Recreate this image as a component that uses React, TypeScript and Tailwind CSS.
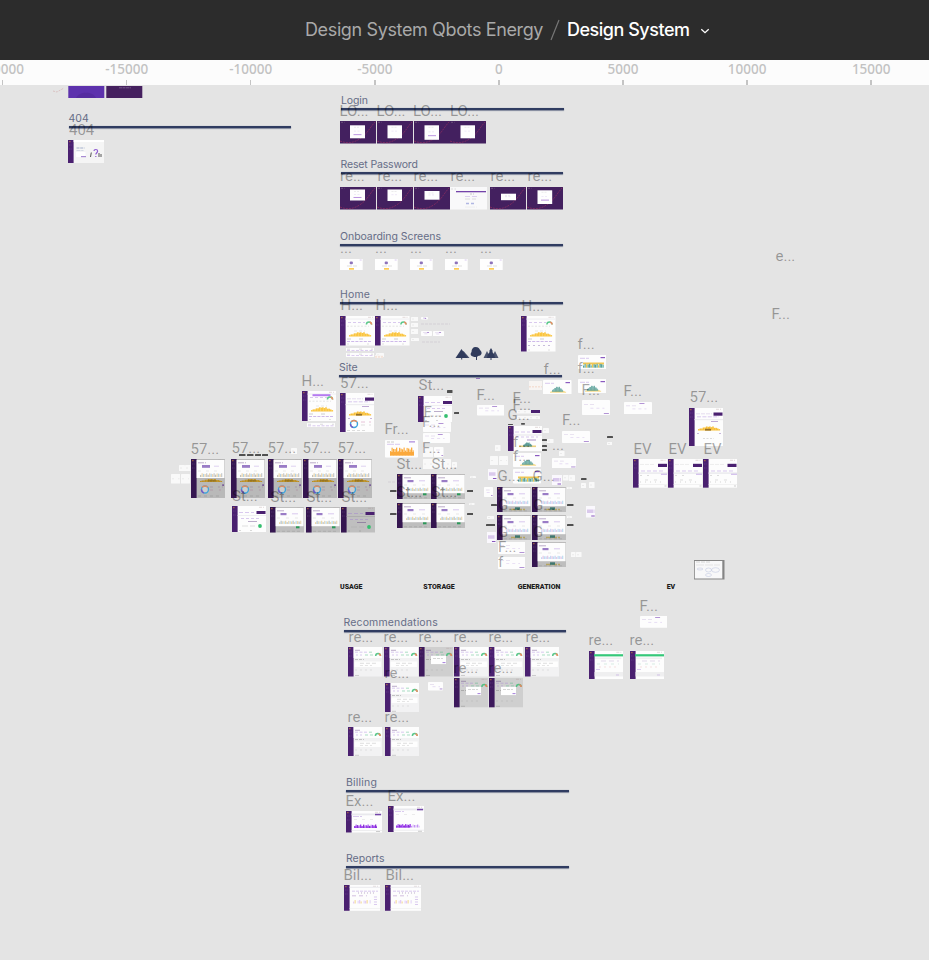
import React from "react";

type Kind =
  | "home" | "homePurple" | "site" | "siteYellow" | "siteModal" | "storage" | "storageModal" | "storageGray"
  | "gen" | "genModal" | "ev" | "rec" | "recGray" | "recGreen" | "billing" | "report" | "notFound"
  | "note" | "noteRight" | "plain" | "lilac" | "faint" | "teal" | "tealWide" | "orange" | "onboard" | "rule" | "peach";

type Item = [Kind, number, number, number, number];

const PURPLE = "#4a2070";
const VIOLET = "#9b6fd6";

function Dash({ x, y, w, c = VIOLET, d = "2 1.5", t = 0.8, o = 0.6 }: {
  x: number; y: number; w: number; c?: string; d?: string; t?: number; o?: number;
}) {
  return <line x1={x} x2={x + w} y1={y} y2={y} stroke={c} strokeWidth={t} strokeDasharray={d} opacity={o * 0.75} />;
}

const shape = [2, 3, 3, 4.5, 4.5, 6, 5.5, 6, 5, 6, 4, 4, 3, 2];

function Hill({ x, y, w, h, c }: { x: number; y: number; w: number; h: number; c: string }) {
  const s = w / shape.length;
  return (
    <g fill={c}>
      {shape.map((v, i) => (
        <rect key={i} x={x + i * s} y={y - (v * h) / 6} width={s + 0.1} height={(v * h) / 6} />
      ))}
    </g>
  );
}

function Bars({ x, y, w, h, cs }: { x: number; y: number; w: number; h: number; cs: string[] }) {
  const n = Math.floor(w / 1.5);
  return (
    <g>
      {Array.from({ length: n }, (_, i) => {
        const v = h * (0.55 + 0.45 * Math.abs(Math.sin(i * 1.9)));
        return <rect key={i} x={x + i * 1.5} y={y - v} width={1.3} height={v} fill={cs[i % cs.length]} />;
      })}
    </g>
  );
}

function Gauge({ x, y, r }: { x: number; y: number; r: number }) {
  const arc = `M${x - r} ${y}A${r} ${r} 0 0 1 ${x + r} ${y}`;
  return (
    <g fill="none" strokeWidth={1.5} opacity={0.85}>
      <path d={arc} stroke="#3fbf78" />
      <path d={arc} stroke="#f0784a" pathLength={10} strokeDasharray="0 6 4" />
    </g>
  );
}

function Donut({ x, y }: { x: number; y: number }) {
  return (
    <g fill="none" strokeWidth={1.4}>
      <circle cx={x} cy={y} r={3.5} fill="#ffffff" fillOpacity={0.3} stroke="#3da4dc" />
      <circle cx={x} cy={y} r={3.5} stroke="#e58a5a" pathLength={10} strokeDasharray="3 7" strokeDashoffset={4} />
      <circle cx={x} cy={y} r={3.5} stroke="#7659c4" pathLength={10} strokeDasharray="2 8" strokeDashoffset={7} />
    </g>
  );
}

function Shell({ w, h, bg = "#fdfdfd", side = PURPLE }: { w: number; h: number; bg?: string; side?: string }) {
  return (
    <g>
      <rect width={w} height={h} fill={bg} />
      <rect width={5.6} height={h} fill={side} />
      <rect x={1} y={1.2} width={1.6} height={1} fill="#c9803c" opacity={0.8} />
      <Dash x={1} y={5} w={3} c="#a883c9" d="1 0.6" o={0.4} />
      <Dash x={1} y={9} w={3} c="#a883c9" d="1 0.6" o={0.4} />
      <Dash x={w - 7} y={1.3} w={5} c="#a88a8a" d="3 1" o={0.5} />
    </g>
  );
}

function Art({ kind, w, h }: { kind: Kind; w: number; h: number }) {
  switch (kind) {
    case "home":
    case "homePurple":
      return (
        <g>
          <Shell w={w} h={h} />
          <rect x={5.6} y={2.5} width={w} height={1.2} fill="#efeff2" />
          {kind === "homePurple" && <rect x={10.5} y={3.2} width={18} height={2} fill="#b57bf0" />}
          <Dash x={8} y={6.5} w={17} d="3 2" />
          <Gauge x={w - 6} y={8.5} r={2.6} />
          <Dash x={7} y={10.2} w={22} c="#888" o={0.35} />
          <Dash x={14} y={15} w={11} c="#aaa" d="3 2" o={0.4} />
          <Hill x={9} y={20.5} w={22} h={4.2} c="#fac53f" />
          <Dash x={7} y={23} w={24} c="#666" d="4 8" o={0.5} />
          <Dash x={7} y={25.5} w={24} d="3 1.2" o={0.8} />
          {h > 32 && <Dash x={7} y={29.5} w={24} c="#6c4aa2" d="2 3" />}
          <Dash x={7} y={h - 1.5} w={24} c="#888" d="2 18" o={0.4} />
        </g>
      );
    case "site":
    case "siteYellow":
      return (
        <g>
          <Shell w={w} h={h} />
          <Dash x={7} y={5.8} w={16} c="#b094d0" d="4 1" o={0.5} />
          <rect x={w - 9.5} y={4.5} width={9} height={3.2} fill={PURPLE} />
          <Dash x={8} y={8.8} w={22} d="4 1.4" />
          <rect x={5.6} y={11} width={w} height={1.2} fill="#ededf0" />
          <Dash x={22} y={13.5} w={7} c="#6c3aa0" d="8 1" o={0.7} />
          <Hill x={9} y={22.5} w={22} h={4} c="#f8bf36" />
          <rect x={16} y={20.8} width={6} height={1.8} fill="#94702a" />
          <Dash x={8} y={25.5} w={24} c="#6c3aa0" d="2 20" />
          {kind === "site" ? (
            <g>
              <Donut x={14} y={31} />
              <Dash x={21} y={29} w={10} c="#c25c9a" d="4 4 2 4" />
              <Dash x={21} y={32} w={10} c="#aaa" d="4 4 2 4" />
              <Dash x={7} y={37.5} w={20} c="#777" d="3 2" o={0.4} />
            </g>
          ) : (
            <Dash x={14} y={30.5} w={11} c="#777" o={0.4} />
          )}
        </g>
      );
    case "siteModal":
      return (
        <g>
          <Shell w={w} h={h} bg="#b9b9b9" side="#351650" />
          <rect x={5.6} y={1} width={w - 6.4} height={18} fill="#fdfdfd" />
          <Dash x={7} y={3.8} w={8} c={PURPLE} d="6 1" />
          <rect x={11} y={6} width={8} height={2.8} fill="#9a7cc6" />
          <Dash x={23} y={7.2} w={5} d="5 1" o={0.5} />
          <Dash x={7} y={12} w={22} c="#aaa" d="3 5" o={0.4} />
          <Bars x={9} y={18} w={23} h={3.8} cs={["#c4c1bb", "#ecd7ae", "#b5d3e6", "#f0d9b2", "#c9cdd0"]} />
          <Hill x={9} y={23} w={22} h={3} c="#bd9020" />
          <Dash x={17} y={21.8} w={9} c="#66501b" d="8 1" t={1.4} />
          <Donut x={14} y={30.5} />
          <Dash x={19} y={28} w={13} c="#6e3f70" d="3 5 2 2" o={0.4} />
          <Dash x={19} y={31} w={13} c="#a35a83" d="3 6 2 2" o={0.5} />
          <rect x={w - 3} y={25.5} width={1.8} height={1.2} fill="#5d348a" />
          <Dash x={7} y={37} w={24} c="#666" d="3 3" o={0.4} />
        </g>
      );
    case "storage":
    case "storageGray":
      return (
        <g>
          <Shell w={w} h={h} bg={kind === "storage" ? "#fdfdfd" : "#bfbfbf"} side={kind === "storage" ? PURPLE : "#351650"} />
          <Dash x={7} y={6.5} w={15} d="4 2" />
          <rect x={w - 9.5} y={5} width={9} height={3} fill={PURPLE} />
          <rect x={5.6} y={9} width={w} height={0.8} fill={kind === "storage" ? "#eaeaee" : "#aaa"} />
          <Dash x={9} y={12.5} w={20} d="3 2" />
          <Dash x={16} y={15.5} w={10} c={PURPLE} d="9 1" />
          <Dash x={10} y={20} w={13} c="#aaa" d="6 2" />
          <circle cx={28} cy={20} r={1.9} fill="#35bf6f" />
          <Dash x={7} y={h - 1.5} w={15} c="#666" d="2 9" o={0.4} />
        </g>
      );
    case "storageModal":
    case "genModal": {
      const gen = kind === "genModal";
      return (
        <g>
          <Shell w={w} h={h} bg="#bebebe" side="#351650" />
          <rect x={5.6} y={1} width={w - 6.4} height={18.2} fill="#fdfdfd" />
          <Dash x={7} y={3.8} w={8} c={PURPLE} d="7 1" />
          <rect x={10.5} y={6} width={6} height={2.2} fill="#9a7cc6" />
          <Dash x={22} y={6.8} w={6} d="6 1" o={0.6} />
          <Dash x={7} y={11} w={22} c="#aaa" d="3 6" o={0.4} />
          <Bars x={9} y={17} w={23} h={3.3} cs={gen ? ["#cbd6f4", "#e3cbe6", "#c1dff2"] : ["#ecd7a8", "#b7c7d2", "#eadbbd", "#bddbec"]} />
          {gen ? (
            <g>
              <Dash x={14} y={22.5} w={14} c="#b29a38" d="5 1" t={1.3} o={0.9} />
              <rect x={18} y={20.3} width={5} height={2.5} fill="#3f7770" />
            </g>
          ) : (
            <rect x={26} y={19.3} width={3.5} height={2} fill="#2c9959" />
          )}
          <Dash x={7} y={h - 1.2} w={24} c="#777" d="3 2" o={0.4} />
        </g>
      );
    }
    case "gen":
      return (
        <g>
          <Shell w={w} h={h} />
          <Dash x={7} y={6} w={15} d="4 2" />
          <rect x={w - 9.5} y={4} width={9} height={3} fill={PURPLE} />
          <rect x={5.6} y={8.5} width={w} height={1} fill="#e5e5ea" />
          <Dash x={8} y={11} w={22} d="3 2" />
          <Dash x={19} y={14} w={9} c="#6b3b99" d="9 1" t={1.2} />
          <rect x={11} y={19.5} width={17} height={1.6} fill="#ebcf7c" />
          <Hill x={15} y={20.5} w={9} h={4} c="#3d8a84" />
        </g>
      );
    case "ev":
      return (
        <g>
          <Shell w={w} h={h} />
          <Dash x={7} y={5.5} w={14} c="#aaa" d="4 1" o={0.3} />
          <rect x={w - 9.5} y={4.8} width={9} height={3.2} fill={PURPLE} />
          <Dash x={8} y={12} w={24} d="4 2" />
          <rect x={5.6} y={13.5} width={w} height={1.2} fill="#e6e6ea" />
          <Dash x={28} y={15.3} w={6} d="6 1" t={1.2} />
          <Dash x={7} y={16.5} w={14} c="#777" d="2 5" o={0.4} />
          <Dash x={12} y={21} w={18} c="#999" d="3 6" o={0.5} />
          <Dash x={7} y={23} w={24} c="#777" d="1 4" o={0.5} />
          <rect x={5.6} y={25} width={w} height={0.7} fill="#ececec" />
          <Dash x={w - 3} y={27} w={2} c="#777" d="2 1" />
        </g>
      );
    case "rec":
    case "recGray": {
      const gray = kind === "recGray";
      return (
        <g>
          <Shell w={w} h={h} bg={gray ? "#cfcfcf" : "#f2f2f3"} side={gray ? "#3d195c" : PURPLE} />
          {!gray && <rect x={5.6} width={w} height={11} fill="#fdfdfd" />}
          <Dash x={7} y={3.3} w={6} c={PURPLE} d="5 1" />
          <Dash x={7} y={5.2} w={13} d="3 1.5" />
          <Dash x={21} y={5.2} w={3} c="#47b87f" d="3 1" t={1} />
          <Dash x={8} y={8} w={7} d="2 2" />
          <Dash x={17} y={8} w={8} c="#47b87f" d="3 2" t={1} />
          <Gauge x={w - 4.2} y={9} r={2.4} />
          <Dash x={7} y={12.5} w={9} c="#555" d="3 1" o={0.5} />
          {gray ? (
            <g>
              <rect x={12} y={8.8} width={15} height={8.3} fill="#fefefe" />
              <Dash x={14} y={11.5} w={10} c="#777" d="3 1" o={0.5} />
              <rect x={23.5} y={15.2} width={3} height={0.9} fill={VIOLET} />
            </g>
          ) : (
            <g>
              <rect x={6.6} y={14.5} width={w - 8} height={5.5} fill="#fefefe" />
              <Dash x={12} y={16.3} w={18} c="#999" d="4 2" o={0.5} />
              <Dash x={12} y={18.5} w={12} c="#999" d="3 2" o={0.4} />
            </g>
          )}
          <Dash x={7} y={23} w={20} c="#888" d="2 3" o={0.3} />
          <Dash x={7} y={h - 1} w={24} c="#555" d="4 20" o={0.4} />
        </g>
      );
    }
    case "recGreen":
      return (
        <g>
          <Shell w={w} h={h} />
          <rect x={5} y={3.2} width={w - 5} height={2.2} fill="#35c879" />
          <rect x={6} y={6.5} width={w - 8} height={1.6} fill="#eef0f0" />
          <Dash x={12} y={10} w={18} d="5 3" c="#b39acb" />
          <Dash x={8} y={13} w={22} c="#82c5aa" d="3 4" o={0.5} />
          <Dash x={10} y={16} w={18} c="#e7a1a1" d="2 3" o={0.5} />
          <Dash x={7} y={18.5} w={5} d="4 1" />
          <rect x={5.6} y={21} width={w} height={4.5} fill="#efeff0" />
          <Dash x={27} y={24} w={3} d="3 1" />
        </g>
      );
    case "billing": {
      const y = h > 24 ? 21.5 : 17;
      return (
        <g>
          <Shell w={w} h={h} />
          <rect x={5.6} y={2.5} width={w} height={1.8} fill="#e9e9ed" />
          <rect x={w - 7} y={2.8} width={6} height={1.5} fill="#7345a8" />
          <Dash x={7} y={5.5} w={9} d="6 1" />
          <Dash x={8} y={8.5} w={24} c="#999" d="3 5" o={0.3} />
          <rect x={8} y={y - 1.7} width={h > 24 ? 14 : 23} height={1.7} fill="#9230e6" />
          {h > 24 ? (
            <g>
              <Bars x={8} y={y} w={15} h={3.5} cs={["#9a3aec", "#aa5cf0", "#8831d3"]} />
              <Bars x={23} y={y} w={9} h={3} cs={["#c393f4", "#dcc3f7"]} />
            </g>
          ) : (
            <Bars x={8} y={y} w={23.5} h={3.5} cs={["#9a3aec", "#aa5cf0", "#8831d3", "#c393f4"]} />
          )}
          <rect x={5.6} y={h - 2.5} width={w} height={0.7} fill="#e5e5e8" />
          <Dash x={w - 6} y={h - 1} w={4} c="#777" d="4 1" />
        </g>
      );
    }
    case "report":
      return (
        <g>
          <Shell w={w} h={h} />
          <rect x={5.6} y={1.8} width={w} height={1} fill="#eaeaee" />
          <Dash x={8} y={6.2} w={26} d="3 1" />
          <Dash x={14} y={8} w={16} c={PURPLE} d="1 2" />
          <Dash x={8} y={10.8} w={15} d="4 3" c="#8a57b3" />
          <Bars x={9} y={18.5} w={18} h={3.5} cs={["#e3cdf7", "#f6dfa5", "#fdfdfd", "#e7daf8"]} />
          {[12, 14.5, 17, 19.5].map((y) => <Dash key={y} x={30} y={y} w={4} d="3 1" />)}
          <rect x={5.6} y={23} width={w} height={0.7} fill="#eee" />
        </g>
      );
    case "notFound":
      return (
        <g>
          <Shell w={w} h={h} bg="#f5f5f5" />
          <rect x={5.6} width={w} height={2} fill="#fff" />
          <Dash x={8.5} y={8} w={8} c="#a9b4cf" d="3 0.7" t={2} o={0.7} />
          <Dash x={8.5} y={10.5} w={7} c="#a9b4cf" d="4 0.7" t={1} />
          <rect x={8} y={12} width={9.5} height={5} fill="#fff" />
          <rect x={13} y={16} width={5} height={1.2} fill="#a98cd3" />
          <path d="M22.5 17l0.8-4.500M31 17v-4M33 17v-3" stroke="#555" strokeWidth={1} />
          <path d="M26 11c0-2 3.600-2 3.600 0s-1.800 2-1.800 3.600m0 1.400v1" stroke="#8e5bd0" strokeWidth={1.2} fill="none" />
        </g>
      );
    case "note":
    case "noteRight":
      return (
        <g>
          <rect width={w} height={h} rx={0.8} fill="#fdfdfd" />
          <Dash x={2} y={h * 0.3} w={w * 0.4} c="#a88bc8" d="4 2" o={0.4} />
          <Dash x={w * 0.3} y={h * 0.55} w={w * 0.5} d="3 3" o={0.35} />
          <rect x={kind === "note" ? w * 0.55 : w * 0.78} y={kind === "note" ? 1 : h - 2} width={w * 0.18} height={0.9} fill="#8757bd" opacity={0.7} />
        </g>
      );
    case "lilac":
      return (
        <g>
          <rect width={w} height={h} fill="#faf8fd" />
          <Dash x={1} y={h * 0.45} w={w - 2} c="#c5abe2" d="6 0.5" t={3.5} o={0.8} />
          <rect x={w * 0.55} y={h - 2} width={3.5} height={1} fill="#8757bd" />
        </g>
      );
    case "teal":
    case "tealWide":
      return (
        <g>
          <rect width={w} height={h} rx={0.8} fill="#fdfdfd" />
          <Dash x={2} y={3.3} w={9} d="5 1" />
          <rect x={w - 6} y={2} width={4.5} height={1.2} fill="#8b5bc0" />
          {kind === "teal" ? (
            <g>
              <Hill x={7} y={12.5} w={16} h={2} c="#f3ca55" />
              <Hill x={9} y={11.8} w={11} h={5} c="#63a69f" />
            </g>
          ) : (
            <g>
              <rect x={5} y={7.5} width={21} height={2} fill="#f1c653" />
              <Bars x={5} y={12.7} w={21.5} h={4} cs={["#59a299", "#71b3a6", "#edc64f", "#59a299"]} />
            </g>
          )}
        </g>
      );
    case "orange":
      return (
        <g>
          <rect width={w} height={h} rx={0.8} fill="#fdfdfd" />
          <Dash x={2} y={2} w={8} c="#777" d="3 1" />
          <rect x={24} y={1.4} width={6} height={1} fill={VIOLET} />
          <Dash x={2} y={4.3} w={13} d="7 1" />
          <Bars x={5} y={15.5} w={25} h={8} cs={["#fba93c", "#fdb34c"]} />
          <rect x={5} y={12} width={24} height={3.5} fill="#fba93c" />
        </g>
      );
    case "onboard":
      return (
        <g>
          <rect width={w} height={h} fill="#fefefe" />
          <rect x={9.7} y={2.4} width={3.2} height={2.800} rx={1} fill="#8d72ba" />
          <Dash x={7} y={7} w={10} c="#999" d="5 1" o={0.5} />
          <rect x={9} y={9.2} width={5} height={1.4} fill="#fdc02f" />
          <Dash x={w - 3} y={1} w={2} d="2 1" />
        </g>
      );
    case "rule":
      return (
        <g>
          <rect width={w} height={h} fill="#fdfdfd" />
          <Dash x={1} y={h * 0.3} w={w - 2} c="#777" d="3 9" o={0.4} />
          <Dash x={1} y={h * 0.65} w={w - 2} d="3 1.5" />
        </g>
      );
    case "peach":
      return (
        <g>
          <rect width={w} height={h} fill="#f7f4f2" />
          <Dash x={0} y={h * 0.65} w={w} c="#eda27c" d="2 1" />
        </g>
      );
    case "faint":
      return <Dash x={0} y={h / 2} w={w} c="#9b91a8" d="3 1" t={0.7} o={0.4} />;
    default:
      return (
        <g>
          <rect width={w} height={h} rx={0.5} fill="#f9f9f9" />
          <Dash x={1} y={h * 0.5} w={w - 2} c="#888" d="2 4" o={0.2} />
        </g>
      );
  }
}

const items: Item[] = [
  ["notFound", 68, 140, 36, 23],
  ...[340, 375, 410, 445, 480].map((x): Item => ["onboard", x, 258.5, 22.7, 11.5]),
  ["home", 340, 316, 35, 29.5], ["home", 375.3, 316, 34.5, 29.5], ["home", 521.3, 316, 34.5, 35.5],
  ["rule", 346, 347.5, 28, 3.8], ["rule", 346, 353, 28, 4], ["plain", 376, 353, 8, 4], ["peach", 375, 355, 8, 3],
  ["plain", 410.5, 317, 7.5, 4], ["plain", 410.5, 323, 7.5, 4], ["plain", 410.5, 329, 7.5, 5], ["plain", 410.5, 338, 8, 3],
  ["note", 421, 317, 7, 2.5], ["faint", 421, 322.5, 29, 2], ["note", 421, 330.5, 11, 5], ["note", 433, 330.5, 11, 5.5], ["faint", 422, 340, 18, 4],
  ["homePurple", 301.5, 391, 34, 30], ["rule", 307, 422.7, 28, 4.3], ["site", 339.7, 393, 34.5, 39],
  ["plain", 178.5, 465, 6, 6], ["plain", 185, 465, 5.5, 6], ["plain", 170.5, 474, 9.5, 9.5], ["plain", 181, 474, 9, 9.5], ["plain", 291, 448, 6, 6],
  ...[191, 231.3, 267.5, 302.7, 337.5].map((x, i): Item => ["siteModal", x, i ? 458.5 : 459, 34.2, 39]),
  ["storage", 231.7, 506, 34, 26], ["storageModal", 270, 507, 34.3, 25.5], ["storageModal", 306.2, 507, 34.3, 25.5], ["storageGray", 341, 507, 34, 25.5],
  ["storage", 417.8, 396, 34.5, 26], ["note", 423, 421.7, 28, 10], ["note", 423, 433, 27, 10],
  ["plain", 422.5, 447, 10, 10], ["noteRight", 434, 447, 9.5, 10], ["plain", 422.5, 459, 17, 10], ["plain", 440, 459, 11, 10], ["plain", 451.5, 462, 5, 5.5],
  ["orange", 385, 440, 33, 17.5], ["note", 476.7, 405, 27.5, 10.5],
  ["plain", 495, 445, 5.5, 6], ["plain", 489.5, 456, 8, 9], ["plain", 499, 456, 9, 9], ["lilac", 488, 469, 9, 11], ["noteRight", 484, 487, 9, 10],
  ["storageModal", 396.5, 474, 34.5, 25], ["storageModal", 430.7, 474, 34.5, 25], ["storageModal", 396.5, 502.7, 34.5, 25], ["storageModal", 430.7, 502.7, 34.5, 25],
  ["plain", 469.5, 476, 6, 2.3], ["plain", 469, 502.7, 5.5, 2.3], ["faint", 388, 481, 8, 2],
  ["tealWide", 577.5, 355, 28.5, 14], ["teal", 577.5, 378.5, 28.5, 14], ["teal", 543, 379.5, 28.5, 14.5], ["peach", 529, 381, 13, 9],
  ["noteRight", 581.5, 400, 28, 15], ["plain", 517, 410, 23, 3.5], ["plain", 517, 415.5, 23, 3.5],
  ["gen", 507.5, 426, 34, 25], ["plain", 543, 427.5, 6, 5], ["plain", 547, 439, 6.5, 4], ["noteRight", 562, 430.5, 28, 12], ["plain", 606.5, 442, 5.5, 3],
  ["teal", 512.5, 453, 28, 14], ["tealWide", 512.5, 469, 28, 14.5], ["noteRight", 551.5, 457.5, 24.5, 10.5], ["plain", 559, 451, 5.5, 5],
  ["lilac", 552, 474.5, 10, 10.5], ["plain", 563, 475, 5.5, 5.5], ["plain", 569, 475, 6, 6], ["plain", 581, 483, 5, 5], ["plain", 589, 482, 5.5, 6],
  ["lilac", 585.5, 506, 9.5, 11.5], ["plain", 487, 516, 7, 3], ["lilac", 487, 532, 9, 11],
  ["genModal", 497.3, 487, 34.3, 25], ["genModal", 532, 487, 34.3, 25], ["genModal", 497.3, 515.3, 34.3, 25], ["genModal", 532, 515.3, 34.3, 25], ["genModal", 532, 542.3, 34.3, 25],
  ["plain", 567, 487, 5, 2], ["plain", 567, 516, 5, 2],
  ["noteRight", 497.5, 542, 27.5, 12], ["noteRight", 497.5, 557, 27.5, 12], ["plain", 571, 551.5, 4.5, 5.5], ["plain", 576, 551.5, 5.5, 5.5],
  ["note", 623.5, 401.5, 28, 12.5], ["siteYellow", 689, 407.5, 34, 38.5],
  ["ev", 633.2, 459, 34.5, 28.7], ["ev", 668.2, 459, 34.5, 28.7], ["ev", 703.2, 459, 34, 28.7],
  ...[348, 383.5, 418.5, 453.5, 488.5, 525].map((x, i): Item => [i === 2 ? "recGray" : "rec", x, 647, 34.3, 29.5]),
  ["recGray", 453.5, 678.3, 34.5, 29.3], ["recGray", 488.5, 678.3, 34, 29.3], ["rec", 384.5, 683, 34, 29.3], ["noteRight", 428, 682, 15, 8.5],
  ["rec", 347.5, 727, 34, 29.3], ["rec", 384.5, 727, 34, 29.3],
  ["note", 639.5, 616, 27.5, 11.7], ["recGreen", 588.5, 650.5, 34.3, 28.3], ["recGreen", 629.5, 650.5, 34, 28.3],
  ["billing", 346, 811, 36, 21.5], ["billing", 387.5, 806, 36, 26.3],
  ["report", 343.5, 885, 36, 25.8], ["report", 385, 885, 36, 25.8],
];

// Dark auth screens: frame position, then the white card inside it.
const authScreens: number[][] = [
  [340.3, 121, 10, 4.3, 15, 13], [377, 121, 10.5, 4.3, 14.5, 13], [413.7, 121, 10.5, 4.3, 14.5, 14.5], [450.3, 121, 10.5, 4.3, 14.5, 13],
  [340.3, 187, 10, 2.5, 15, 11], [377.3, 187, 10.5, 2.5, 14.5, 11.5], [413.7, 187, 10.5, 4, 15, 8.7], [490.3, 187, 11, 6.7, 15, 6.5], [527.3, 187, 10.500, 3.3, 14.7, 13.7],
];

// Small dark connector chips: x, y, width, height.
const chips: number[][] = [
  [239, 453.5, 6.5, 2.5], [247, 453.5, 6.5, 2.5], [254.5, 453.5, 6.5, 2.5], [261.5, 453.5, 6.5, 2.5],
  [447, 389.7, 5.5, 3], [453.7, 411.7, 5.5, 2], [390, 490, 6.5, 2], [466.5, 490, 6.5, 2], [390, 513, 6.5, 2], [466.5, 513, 6.5, 2],
  [507.5, 423.5, 5, 1.5], [520.5, 423, 4, 1.7], [541.5, 439, 5, 2], [541.5, 444.5, 5, 2], [541.5, 449, 5, 2],
  [606.5, 436, 6, 2], [581, 477.5, 5.5, 2.5], [491, 504, 6, 2], [567, 504, 6.5, 2], [485.5, 524, 9.5, 2.3], [567, 524, 6.5, 2.3],
];

const labels: [string, number, number][] = [
  ["404", 69, 135.5],
  ["LO...", 339.5, 116], ["LO...", 376.5, 116], ["LO...", 413, 116], ["LO...", 450, 116],
  ["re...", 340, 181], ["re...", 377.5, 181], ["re...", 413.500, 181], ["re...", 450.500, 181], ["re...", 490.500, 181], ["re...", 527.500, 181],
  ["...", 340, 253], ["...", 375, 253], ["...", 410, 253], ["...", 445, 253], ["...", 480, 253],
  ["H...", 340.5, 310.5], ["H...", 375.5, 310.5], ["H...", 521.5, 311.5],
  ["H...", 301.5, 386.5], ["57...", 340, 388.5], ["57...", 190.5, 454.5], ["57...", 231.5, 453.5], ["57...", 267.5, 453.5], ["57...", 302.5, 453.5], ["57...", 337.500, 453.5],
  ["St...", 232, 501.5], ["St...", 270.5, 502.5], ["St...", 306.500, 502.5], ["St...", 341.500, 502.5],
  ["St...", 418.5, 390.5], ["F...", 476.500, 400.5], ["F...", 423.500, 417], ["F...", 422, 427], ["Fr...", 384.500, 434.5], ["F...", 422, 453],
  ["St...", 396.5, 469], ["St...", 431.5, 469], ["St...", 396.5, 497.5], ["St...", 431.5, 497.5],
  ["f...", 577.5, 349], ["f...", 577.5, 373], ["f...", 543.5, 374.5], ["F...", 581.5, 395], ["F...", 512.5, 403.5], ["F...", 512.5, 410.5], ["G...", 507.5, 420], ["F...", 562, 425.5],
  ["f...", 513, 447], ["f...", 513, 461.5], ["...", 552, 450],
  ["G...", 497.5, 481], ["G...", 532.500, 481], ["G...", 498, 510], ["G...", 533, 510], ["G", 533, 537], ["G", 498, 537], ["F...", 498, 552], ["f", 498, 567],
  ["F...", 623.5, 396], ["57...", 689.500, 402.5], ["EV", 633.5, 454.5], ["EV", 668.5, 454.5], ["EV", 703.5, 454.5],
  ["e...", 775.5, 261.5], ["F...", 771.5, 319.5], ["F...", 639.5, 611.5], ["re...", 588.5, 645.5], ["re...", 629.5, 645.5],
  ["re...", 348.5, 642.5], ["re...", 383.500, 642.5], ["re...", 418.5, 642.5], ["re...", 453.5, 642.5], ["re...", 488.5, 642.5], ["re...", 525.5, 642.5],
  ["re...", 453.500, 673.5], ["re...", 488.500, 673.5], ["re...", 384.500, 678.5], ["re...", 347.500, 722.5], ["re...", 384.500, 722.5],
  ["Ex...", 345.500, 806.5], ["Ex...", 387.500, 801.5], ["Bil...", 343.500, 880.5], ["Bil...", 385.500, 880.5],
];

// Section heading text, left edge, top of the rule and letter spacing.
const sections: [string, number, number, number][] = [
  ["404", 68.5, 126, 0], ["Login", 341, 108, -0.1], ["Reset Password", 340.5, 172, -0.15], ["Onboarding Screens", 340, 244, -0.05],
  ["Home", 340, 302, 0.15], ["Site", 339, 375, 0], ["Recommendations", 343.5, 630, 0.15], ["Billing", 346, 790, 0.2], ["Reports", 346, 866, 0],
];

const captions: [string, number][] = [["USAGE", 340], ["STORAGE", 423.3], ["GENERATION", 517.7], ["EV", 666.7]];

function at(x: number, y: number, w?: number, h?: number): React.CSSProperties {
  return { left: x, top: y, width: w, height: h };
}

function AuthScreen({ d }: { d: number[] }) {
  const [x, y, cx, cy, cw, ch] = d;
  return (
    <svg className="absolute" style={at(x, y, 36, 22.5)} viewBox="0 0 36 22.5">
      <rect width={36} height={22.5} fill="#43205f" />
      <path d="M0 20C8 23 14 22 21 17S30 6 36 0" fill="none" stroke="#a3305f" strokeWidth={0.8} strokeDasharray="2 1" opacity={0.75} />
      <Dash x={1} y={1.3} w={4} c="#cbb" o={0.5} />
      <rect x={cx} y={cy} width={cw} height={ch} fill="#fefefe" />
      <Dash x={cx + 4} y={cy + 2} w={6} c="#999" d="2 1" o={0.3} />
      {x < 345 || x === 413.7 || x > 525 ? (
        <rect x={cx + 3.5} y={cy + ch * 0.68} width={8} height={1} fill="#a06ad4" opacity={ch > 9 ? 0.7 : 0} />
      ) : null}
      <Dash x={cx + 4} y={cy + ch * 0.45} w={6} o={0.25} />
    </svg>
  );
}

function Trees() {
  return (
    <svg className="absolute" style={at(455, 346, 44, 15)} viewBox="0 0 44 15" fill="#303b5c">
      <path d="M6.500 3L0.500 12H12.500Z" />
      <path d="M8.500 5L3 12H14.500Z" opacity={0.9} />
      <path d="M6.200 12h1v1.500h-1z" />
      <path d="M20.500 1c3 0 4 1.500 4.500 3 3 2.500 1.500 6-2 6l-1 1v3h-1v-3c-5 0-6.500-2.500-4.500-5 0-3 1.500-5 4-5z" />
      <path d="M36 2l2 3.500-1 0 3 4-1 0 1.500 2.500h-9l1.500-2.500-1 0 3-4-1 0z" />
      <path d="M32 5L28.500 12h7zM40 5l3.500 7h-7z" opacity={0.85} />
      <path d="M35.500 11h1v3h-1z" />
    </svg>
  );
}

function Canvas() {
  return (
    <main className="relative -mt-[85px] h-[960px] w-full">
      <svg className="absolute" style={at(52, 85, 92, 14)} viewBox="0 0 92 14">
        <path d="M1 6l4 1 7-4" fill="none" stroke="#d5b3b3" strokeWidth={0.7} strokeDasharray="2 1" />
        <rect x={16.3} y={1} width={36} height={12} fill="#5d32ad" />
        <path d="M24 13C27 6 41 6 44 13Z" fill="#502898" opacity={0.6} />
        <rect x={54.3} y={1} width={36} height={12} fill="#45205f" />
        <Dash x={67} y={2.8} w={12} c="#cbbbd7" d="3 0.5" />
      </svg>

      {items.map(([kind, x, y, w, h], i) => (
        <svg key={i} className="absolute" style={at(x, y, w, h)} viewBox={`0 0 ${w} ${h}`}>
          <Art kind={kind} w={w} h={h} />
        </svg>
      ))}
      {authScreens.map((d, i) => <AuthScreen key={i} d={d} />)}

      <svg className="absolute" style={at(450, 187, 37, 22.5)} viewBox="0 0 37 22.5">
        <rect width={37} height={22.5} fill="#f9f9fa" />
        <rect x={6} y={4} width={30} height={1.3} fill="#7444aa" />
        <Dash x={1} y={2} w={5} c="#888" o={0.4} />
        <Dash x={20} y={7} w={4} c="#777" d="2 1" />
        <Dash x={15} y={9.5} w={12} d="5 2" o={0.5} />
        <Dash x={15} y={12} w={11} c="#888" d="5 2" o={0.4} />
        <Dash x={16} y={16.5} w={10} c="#5c68c8" d="3 2" t={1.6} o={0.6} />
        <Dash x={15} y={20} w={12} c="#ddd" d="10 1" />
      </svg>

      <svg className="absolute" style={at(694.3, 560.3, 30.5, 19.500)} viewBox="0 0 30.5 19.5">
        <rect width={30.5} height={19.5} fill="#858585" />
        <rect x={0.8} y={1} width={27.5} height={17.5} fill="#f8f8f9" />
        <Dash x={2} y={2} w={15} c="#888" d="4 1" o={0.5} />
        <Dash x={2} y={5} w={24} c="#aaa" d="8 1" o={0.4} />
        <g fill="none" stroke="#b9c0dc" strokeWidth={0.5}>
          <ellipse cx={6} cy={9} rx={3} ry={1} />
          <ellipse cx={14.5} cy={10} rx={3} ry={2} />
          <ellipse cx={21.5} cy={10} rx={4} ry={2.3} />
          <ellipse cx={14.5} cy={15} rx={3} ry={1.5} />
        </g>
      </svg>

      {chips.map(([x, y, w, h], i) => (
        <svg key={i} className="absolute" style={at(x, y, w, h)} viewBox={`0 0 ${w} ${h}`}>
          <rect width={w} height={h} rx={0.6} fill="#505050" />
        </svg>
      ))}
      <div className="absolute bg-[#4a2070]" style={at(530.5, 410, 9, 2.8)} />
      <div className="absolute bg-[#9d7cc0]" style={at(475.5, 378, 4.5, 1)} />
      <Trees />

      {sections.map(([text, x, y, spacing], i) => (
        <section key={i} className="absolute" style={at(x, y - 14, 222.7, 17)}>
          <h2
            className="h-[14px] whitespace-nowrap font-['Inter','Liberation_Sans',sans-serif] text-[10.5px] leading-[13px] text-[#666d87]"
            style={{ letterSpacing: spacing }}
          >
            {text}
          </h2>
          <div className="h-[2px] bg-[#303c61] shadow-[0_0.5px_1px_#303c61]" />
        </section>
      ))}

      {labels.map(([text, x, y], i) => (
        <span
          key={i}
          className="absolute whitespace-nowrap font-['Roboto','Inter',sans-serif] text-[15px] leading-[20px] text-black/35"
          style={{ left: x, top: y - 15.3 }}
        >
          {text}
        </span>
      ))}

      {captions.map(([text, x]) => (
        <span
          key={text}
          className="absolute whitespace-nowrap font-['Roboto','Inter',sans-serif] text-[7px] font-black leading-[8px] text-[#1d1d1d]"
          style={{ left: x, top: 582.5 }}
        >
          {text}
        </span>
      ))}
    </main>
  );
}

const marks = ["-20000", "-15000", "-10000", "-5000", "0", "5000", "10000", "15000"];

export default function App() {
  return (
    <div className="h-[960px] w-[929px] overflow-hidden bg-[#e4e4e4] font-['Inter','Liberation_Sans',sans-serif]">
      <header className="relative z-10 flex h-[60px] items-center bg-[#2c2c2c] pb-px pl-[305px] text-[18px]">
        <span className="w-[238px] whitespace-nowrap tracking-[-0.37px] text-[#a9a9a9]">Design System Qbots Energy</span>
        <svg className="ml-[7px] h-[22px] w-[10px]" viewBox="0 0 10 22">
          <path d="M1 21L9 1" stroke="#777" strokeWidth="1.2" />
        </svg>
        <span className="ml-[7px] w-[123px] whitespace-nowrap font-medium tracking-[-0.48px] text-white">Design System</span>
        <svg className="ml-[9px] mt-[2px] size-[12px]" viewBox="0 0 12 12" fill="none">
          <path d="M2.300 4.300L6 7.700L9.700 4.300" stroke="#fff" strokeWidth="1.3" />
        </svg>
      </header>
      <div className="relative z-10 h-[25px] overflow-hidden bg-[#fcfcfc]">
        <div className="-ml-[59.5px] flex h-full w-[993px]">
          {marks.map((m) => (
            <div key={m} className="flex w-[124.1px] shrink-0 flex-col items-center justify-between">
              <span className="font-['Noto_Sans',sans-serif] text-[13.5px] font-medium leading-[18px] text-[#c2c2c2]">{m}</span>
              <span className="h-[5px] w-[1.5px] bg-[#c4c4c4]" />
            </div>
          ))}
        </div>
      </div>
      <Canvas />
    </div>
  );
}
